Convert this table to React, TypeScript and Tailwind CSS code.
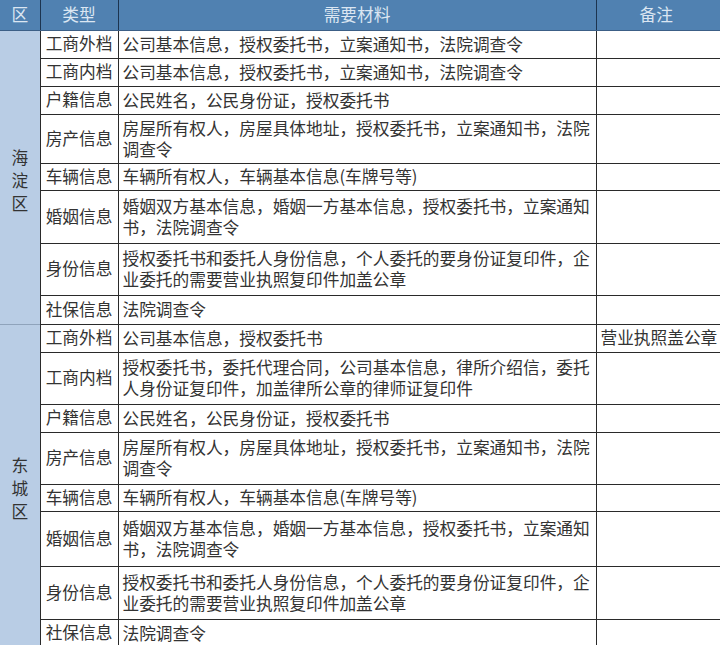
import React from 'react'

type Row = { type: string; lines: string[]; note?: string; h: number }

const HAIDIAN: Row[] = [
  { type: '工商外档', lines: ['公司基本信息，授权委托书，立案通知书，法院调查令'], h: 28 },
  { type: '工商内档', lines: ['公司基本信息，授权委托书，立案通知书，法院调查令'], h: 28 },
  { type: '户籍信息', lines: ['公民姓名，公民身份证，授权委托书'], h: 28 },
  { type: '房产信息', lines: ['房屋所有权人，房屋具体地址，授权委托书，立案通知书，法院', '调查令'], h: 49 },
  { type: '车辆信息', lines: ['车辆所有权人，车辆基本信息(车牌号等)'], h: 27 },
  { type: '婚姻信息', lines: ['婚姻双方基本信息，婚姻一方基本信息，授权委托书，立案通知', '书，法院调查令'], h: 53 },
  { type: '身份信息', lines: ['授权委托书和委托人身份信息，个人委托的要身份证复印件，企', '业委托的需要营业执照复印件加盖公章'], h: 52 },
  { type: '社保信息', lines: ['法院调查令'], h: 29 },
]

const DONGCHENG: Row[] = [
  { type: '工商外档', lines: ['公司基本信息，授权委托书'], note: '营业执照盖公章', h: 28 },
  { type: '工商内档', lines: ['授权委托书，委托代理合同，公司基本信息，律所介绍信，委托', '人身份证复印件，加盖律所公章的律师证复印件'], h: 52 },
  { type: '户籍信息', lines: ['公民姓名，公民身份证，授权委托书'], h: 28 },
  { type: '房产信息', lines: ['房屋所有权人，房屋具体地址，授权委托书，立案通知书，法院', '调查令'], h: 52 },
  { type: '车辆信息', lines: ['车辆所有权人，车辆基本信息(车牌号等)'], h: 27 },
  { type: '婚姻信息', lines: ['婚姻双方基本信息，婚姻一方基本信息，授权委托书，立案通知', '书，法院调查令'], h: 55 },
  { type: '身份信息', lines: ['授权委托书和委托人身份信息，个人委托的要身份证复印件，企', '业委托的需要营业执照复印件加盖公章'], h: 53 },
  { type: '社保信息', lines: ['法院调查令'], h: 28 },
]

function District({ name, rows, first }: { name: string; rows: Row[]; first?: boolean }) {
  return (
    <>
      {rows.map((r, i) => (
        <tr key={r.type + i} style={{ height: r.h }}>
          {i === 0 && (
            <td
              rowSpan={rows.length}
              className={`bg-[#b9cde5] text-center align-middle border-r border-r-[#2a2a2a] ${first ? '' : 'border-t border-t-[#8fa3bb]'}`}
            >
              <div className="flex flex-col items-center leading-[23px] pt-[6px]">
                {name.split('').map((c) => (
                  <span key={c}>{c}</span>
                ))}
              </div>
            </td>
          )}
          <td className="border border-[#2a2a2a] text-center align-middle whitespace-nowrap">{r.type}</td>
          <td className="border border-[#2a2a2a] px-[4px] align-middle leading-[21px] whitespace-nowrap">
            {r.lines.map((l, j) => (
              <div key={j}>{l}</div>
            ))}
          </td>
          <td className="border-y border-l border-[#2a2a2a] px-[4px] align-middle whitespace-nowrap">{r.note ?? ''}</td>
        </tr>
      ))}
    </>
  )
}

export default function App() {
  return (
    <div className="w-[720px] h-[645px] overflow-hidden bg-white">
      <table
        className="border-collapse table-fixed w-[724px] text-[16.7px] text-[#333] [font-family:'Noto_Sans_CJK_SC','Noto_Sans',sans-serif]"
      >
        <colgroup>
          <col className="w-[40px]" />
          <col className="w-[78px]" />
          <col className="w-[478px]" />
          <col className="w-[128px]" />
        </colgroup>
        <thead>
          <tr className="h-[30px] bg-[#5081b1] text-[#dbe6f2]">
            <th className="font-normal border-r border-b border-[#1c3450] border-b-[#3c5f86]">区</th>
            <th className="font-normal border-r border-b border-[#1c3450] border-b-[#3c5f86]">类型</th>
            <th className="font-normal border-r border-b border-[#1c3450] border-b-[#3c5f86]">需要材料</th>
            <th className="font-normal border-b border-b-[#3c5f86] text-left pl-[43px]">备注</th>
          </tr>
        </thead>
        <tbody>
          <District name="海淀区" rows={HAIDIAN} first />
          <District name="东城区" rows={DONGCHENG} />
        </tbody>
      </table>
    </div>
  )
}
